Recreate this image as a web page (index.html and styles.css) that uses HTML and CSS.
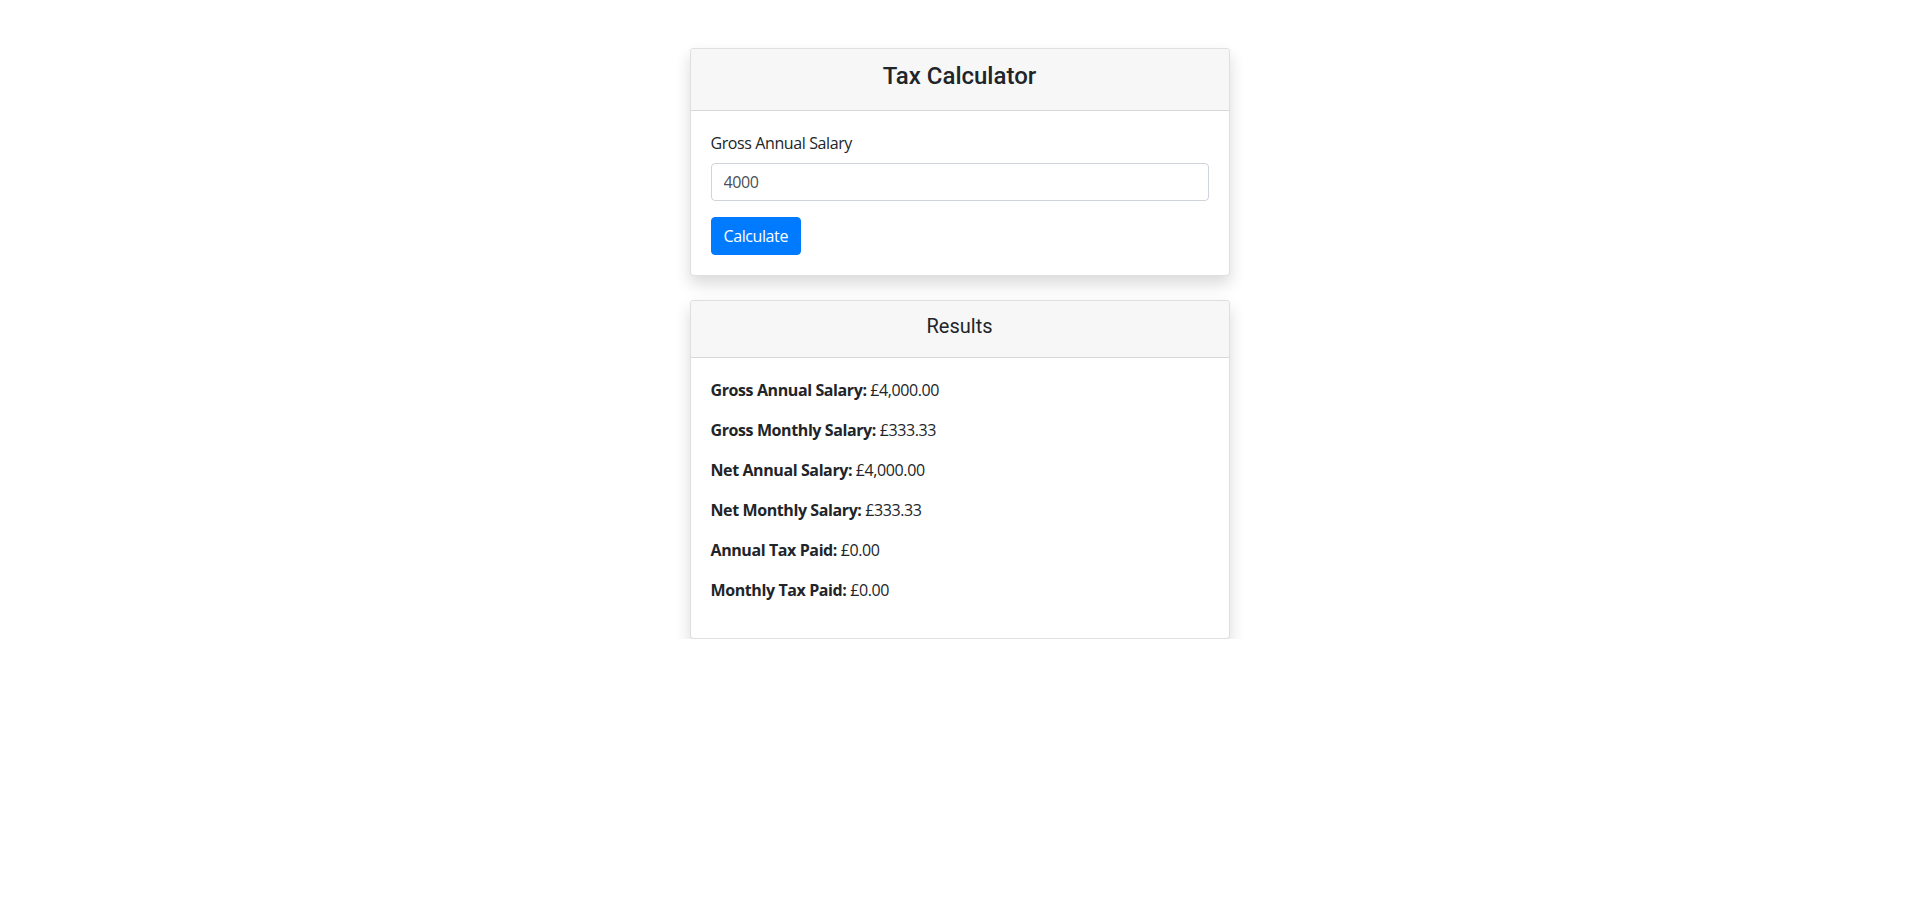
FILE: index.html
```html
<!DOCTYPE html>
<html lang="en">
<head>
<meta charset="utf-8">
<title>Tax Calculator</title>
<link rel="stylesheet" href="styles.css">
</head>
<body>
<div class="container">
  <div class="column">
    <div class="card">
      <div class="card-header">
        <h4 class="title-lg">Tax Calculator</h4>
      </div>
      <div class="card-body">
        <div class="form-group">
          <label class="label" for="salary">Gross Annual Salary</label>
          <input class="input" id="salary" type="text" value="4000">
        </div>
        <button class="btn" type="button">Calculate</button>
      </div>
    </div>
    <div class="card card-results">
      <div class="card-header">
        <h5 class="title-md">Results</h5>
      </div>
      <div class="card-body">
        <p class="row"><strong>Gross Annual Salary:</strong> £4,000.00</p>
        <p class="row"><strong>Gross Monthly Salary:</strong> £333.33</p>
        <p class="row"><strong>Net Annual Salary:</strong> £4,000.00</p>
        <p class="row"><strong>Net Monthly Salary:</strong> £333.33</p>
        <p class="row"><strong>Annual Tax Paid:</strong> £0.00</p>
        <p class="row"><strong>Monthly Tax Paid:</strong> £0.00</p>
      </div>
    </div>
  </div>
</div>
</body>
</html>
```
FILE: styles.css
```css
* { box-sizing: border-box; }
html, body { margin: 0; padding: 0; }
body {
  font-family: "Open Sans", "Noto Sans", sans-serif;
  font-size: 16px;
  line-height: 1.5;
  letter-spacing: -0.4px;
  color: #212529;
  background: #fff;
}
.container {
  display: flex;
  justify-content: center;
  padding-top: 48px;
}
.column {
  width: 540px;
  display: flex;
  flex-direction: column;
}
.card {
  border: 1px solid rgba(0,0,0,.125);
  border-radius: 4px;
  background: #fff;
  box-shadow: 0 8px 16px rgba(0,0,0,.15);
  overflow: hidden;
}
.card-results { margin-top: 24px; }
.card-header {
  background: #f7f7f7;
  border-bottom: 1px solid rgba(0,0,0,.125);
  padding: 13px 20px 11px;
  text-align: center;
}
.title-lg {
  margin: 0 0 8px;
  font-family: Roboto, "Open Sans", sans-serif;
  font-size: 24px;
  font-weight: 500;
  line-height: 1.2;
  letter-spacing: 0;
}
.title-md {
  margin: 0 0 8px;
  font-family: Roboto, "Open Sans", sans-serif;
  font-size: 20px;
  font-weight: 400;
  line-height: 1.2;
  letter-spacing: 0;
}
.card-body { padding: 20px; }
.form-group { margin-bottom: 16px; }
.label { display: inline-block; margin-bottom: 8px; }
.input {
  display: block;
  width: 100%;
  height: 38px;
  padding: 6px 12px;
  font: inherit;
  letter-spacing: inherit;
  color: #495057;
  border: 1px solid #ced4da;
  border-radius: 4px;
  background: #fff;
}
.btn {
  font: inherit;
  letter-spacing: inherit;
  color: #fff;
  background: #007bff;
  border: 1px solid #007bff;
  border-radius: 4px;
  padding: 6px 12px;
  line-height: 1.5;
}
.row { margin: 0 0 16px; }
.row strong { font-weight: 700; }
```
